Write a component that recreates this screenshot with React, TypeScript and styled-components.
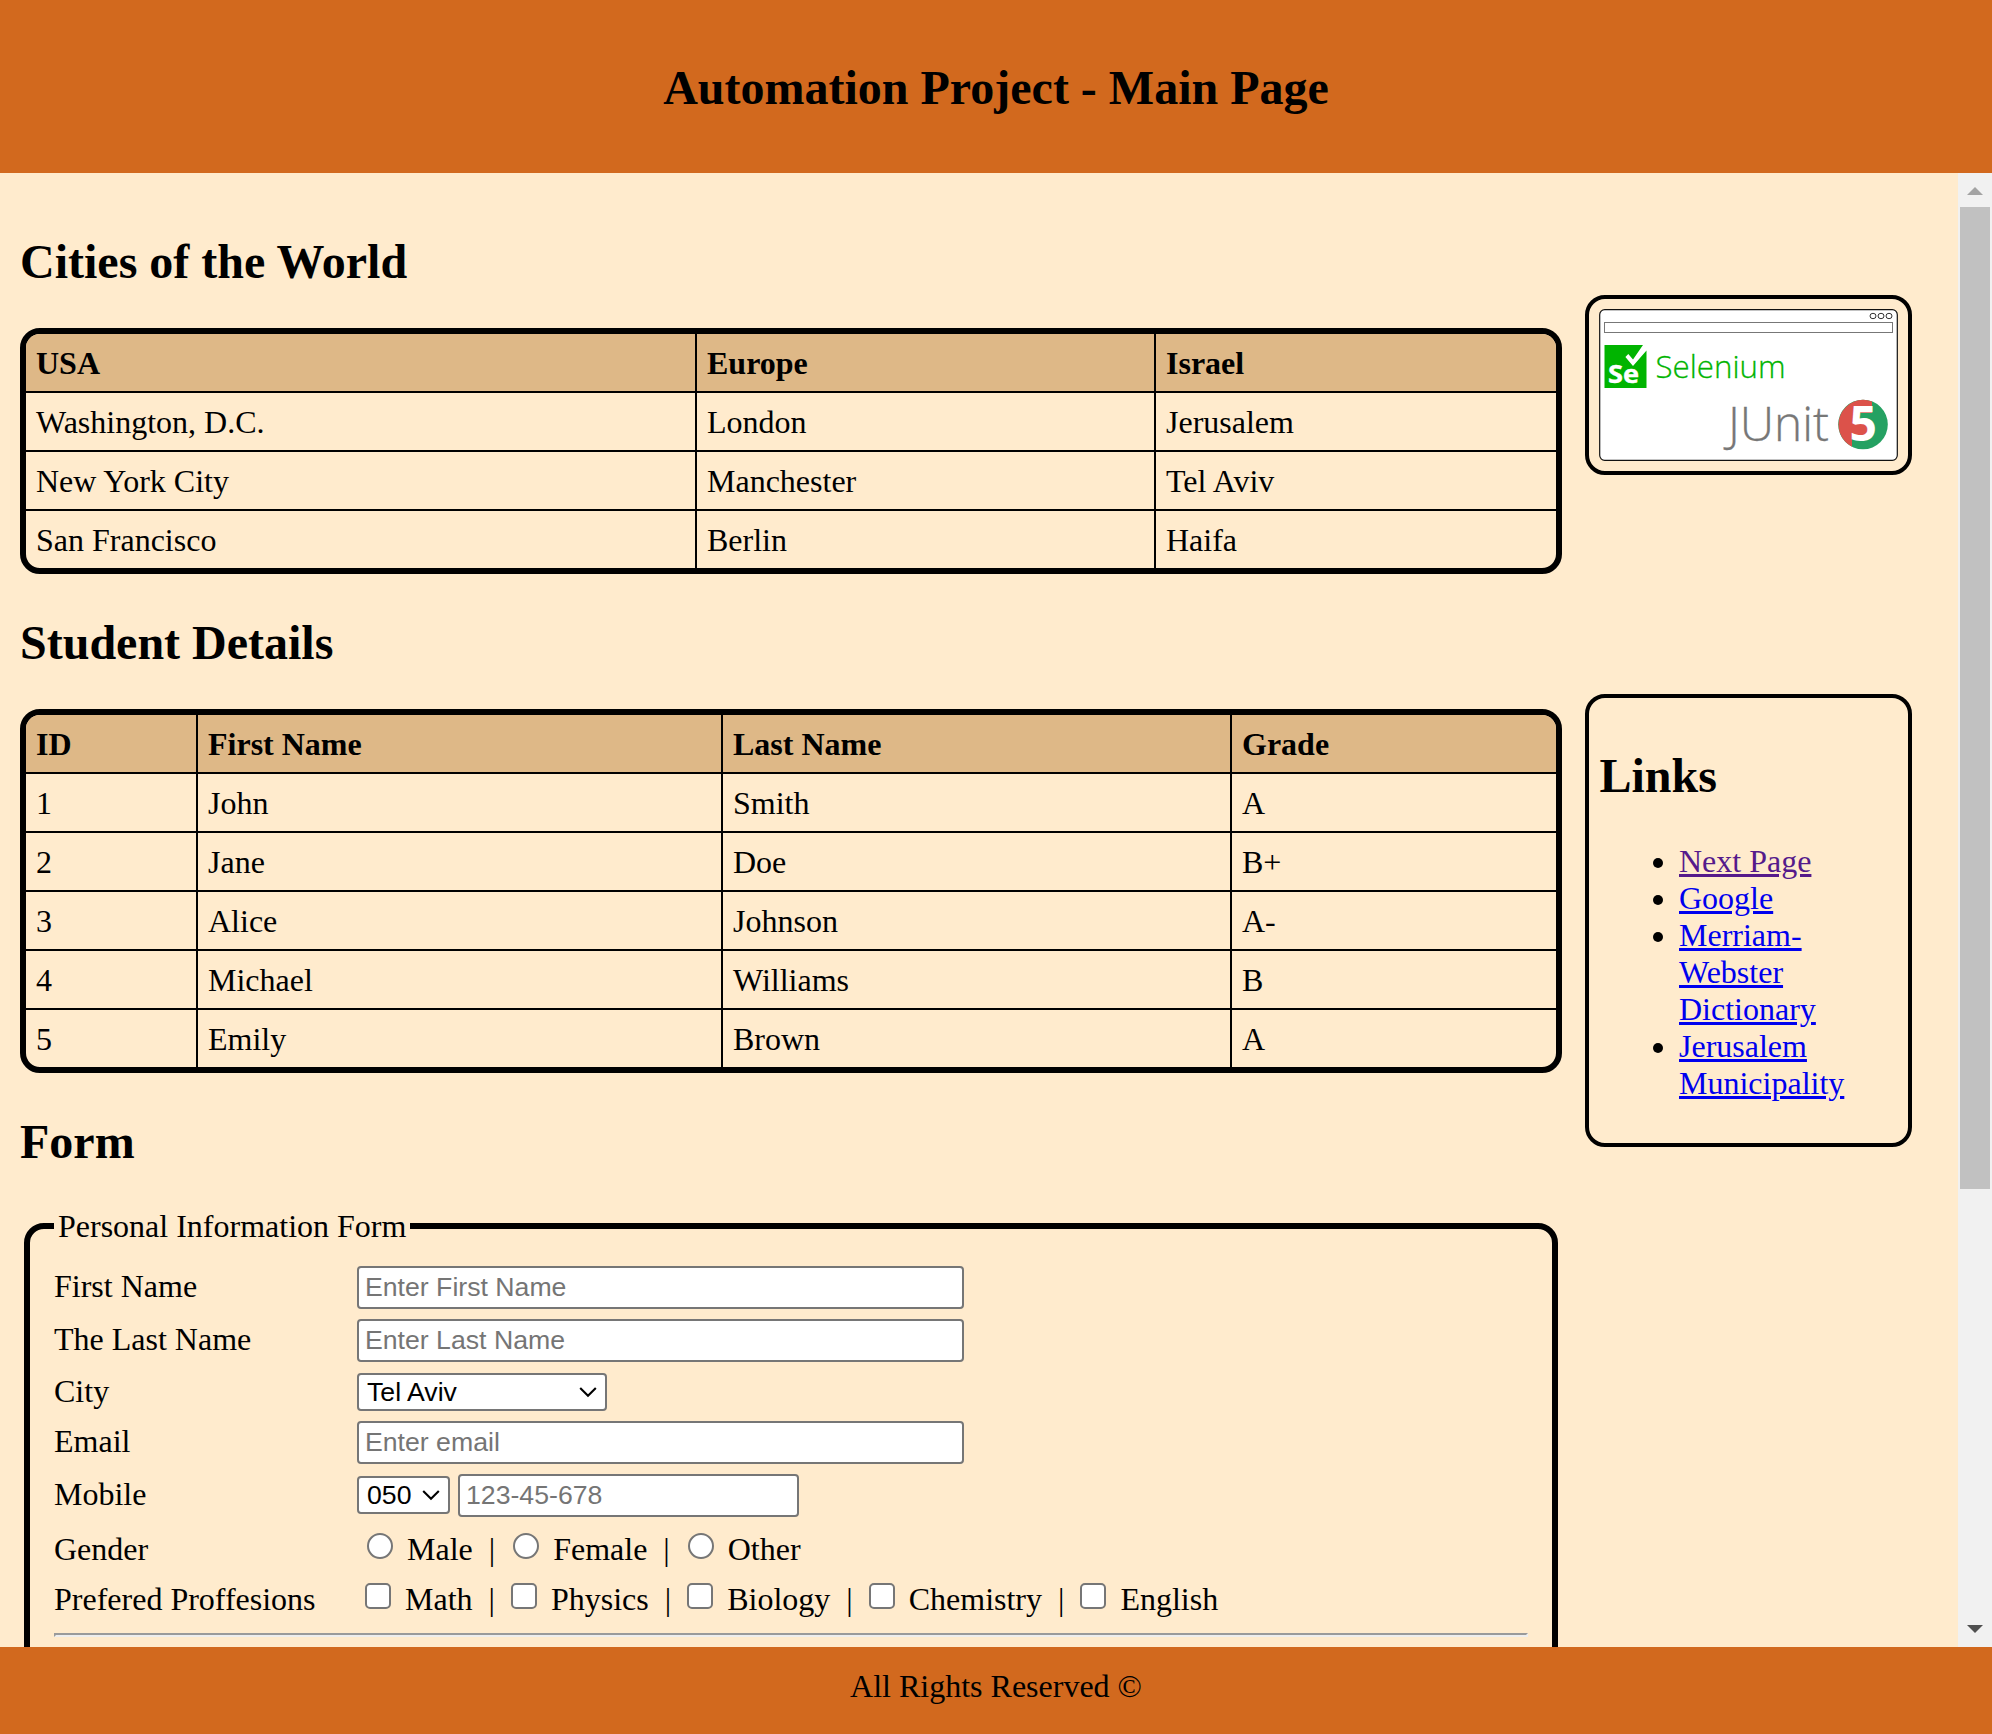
import React from "react";
import styled, { createGlobalStyle, css } from "styled-components";

const serif = `"Liberation Serif", "Times New Roman", serif`;
const sans = `"Liberation Sans", Arial, sans-serif`;

const GlobalStyle = createGlobalStyle`
  * { box-sizing: border-box; }
  html, body { margin: 0; padding: 0; overflow: hidden; }
  body {
    font-family: ${serif};
    font-size: 32px;
    line-height: 37px;
    color: #000;
    background: #ffebcd;
  }
`;

const Page = styled.div`
  display: flex;
  flex-direction: column;
  height: 1734px;
`;

const Header = styled.header`
  flex: none;
  display: flex;
  align-items: center;
  justify-content: center;
  height: 173px;
  padding-top: 1px;
  background: #d2691e;
`;

const Footer = styled.footer`
  flex: none;
  height: 87px;
  padding-top: 20.5px;
  text-align: center;
  background: #d2691e;
`;

const Title = styled.h1`
  margin: 0;
  font-size: 48px;
  line-height: 55px;
`;

const Heading = styled.h2`
  margin: 0;
  padding: 40.5px 0 39.5px;
  font-size: 48px;
  line-height: 55px;
`;

const Body = styled.div`
  flex: none;
  display: flex;
  height: 1474px;
  overflow: hidden;
`;

const Main = styled.main`
  flex: none;
  width: 1562px;
  padding: 20px 0 0 20px;
`;

const Aside = styled.aside`
  flex: none;
  display: flex;
  flex-direction: column;
  align-items: flex-start;
  gap: 219px;
  width: 396px;
  padding: 122px 0 0 23px;
`;

const TableFrame = styled.div`
  border: 6px solid #000;
  border-radius: 20px;
  overflow: hidden;
`;

const Table = styled.table`
  width: 100%;
  table-layout: fixed;
  border-collapse: separate;
  border-spacing: 0;
`;

const cell = css`
  height: 59px;
  padding: 10.5px 10px 9.5px;
  text-align: left;
  border-bottom: 2px solid #000;
  border-right: 2px solid #000;
  &:last-child { border-right: 0; }
`;

const Th = styled.th`
  ${cell}
  background: #deb887;
`;

const Td = styled.td`
  ${cell}
  tr:last-child > & { border-bottom: 0; height: 57px; }
`;

const Card = styled.section<{ $height: number }>`
  width: 327px;
  height: ${(p) => p.$height}px;
  padding: 10px;
  border: 4px solid #000;
  border-radius: 20px;

  ${Heading} { padding: 39.5px 0 40px 0.5px; }
`;

const Logo = styled.svg`
  display: block;
  width: 299px;
  height: 152px;
`;

const LinkList = styled.ul`
  margin: 0;
  padding: 0 0 0 80px;
`;

const Link = styled.a<{ $visited?: boolean }>`
  color: ${(p) => (p.$visited ? "#551a8b" : "#0000ee")};
  text-decoration: underline;
`;

const Fieldset = styled.fieldset`
  margin: 0 4px;
  height: 700px;
  padding: 22px 24px 0;
  border: 6px solid #000;
  border-radius: 20px;
`;

const Legend = styled.legend`
  padding: 0 4px;
  height: 36px;
`;

const Row = styled.div<{ $height: number }>`
  display: grid;
  grid-template-columns: 303px 1fr;
  height: ${(p) => p.$height}px;
`;

const RowLabel = styled.label<{ $top: number }>`
  padding-top: ${(p) => p.$top}px;
`;

const Controls = styled.div`
  display: flex;
  align-items: flex-start;
  gap: 8px;
`;

const TextInput = styled.input<{ $width: number }>`
  width: ${(p) => p.$width}px;
  height: 43px;
  padding: 0 6px;
  border: 2px solid #767676;
  border-radius: 4px;
  background: #fff;
  font: 26.667px ${sans};
  &::placeholder { color: #757575; opacity: 1; }
`;

const SelectWrap = styled.span<{ $width: number; $top?: number }>`
  position: relative;
  width: ${(p) => p.$width}px;
  height: 38px;
  margin-top: ${(p) => p.$top ?? 0}px;
`;

const NativeSelect = styled.select`
  appearance: none;
  display: block;
  width: 100%;
  height: 100%;
  padding: 0 8px;
  border: 2px solid #767676;
  border-radius: 4px;
  background: #fff;
  color: #000;
  font: 26.667px ${sans};
`;

const Chevron = styled.svg`
  position: absolute;
  right: 10px;
  top: 13px;
  width: 18px;
  height: 12px;
`;

const Choices = styled.div<{ $top: number }>`
  padding-top: ${(p) => p.$top}px;
  white-space: pre;
`;

const Choice = styled.input<{ $left: number }>`
  appearance: none;
  width: 26px;
  height: 26px;
  margin: 0 6px 0 ${(p) => p.$left}px;
  vertical-align: 1px;
  border: 2px solid #767676;
  border-radius: ${(p) => (p.type === "radio" ? "50%" : "5px")};
  background: #fff;
`;

const Rule = styled.hr`
  height: 4px;
  margin: 0;
  border: 2px solid;
  border-color: #9a9a9a #eee #eee #9a9a9a;
`;

const ScrollTrack = styled.div`
  flex: none;
  display: flex;
  flex-direction: column;
  align-items: center;
  width: 34px;
  background: #f1f1f1;
`;

const ScrollButton = styled.svg`
  flex: none;
  width: 34px;
  height: 34px;
`;

const ScrollSpace = styled.div`
  flex: 1;
`;

const ScrollThumb = styled.div`
  width: 30px;
  height: 982px;
  background: #c1c1c1;
`;

type DataTableProps = { head: string[]; rows: string[][]; widths: number[] };

function DataTable({ head, rows, widths }: DataTableProps) {
  return (
    <TableFrame>
      <Table>
        <colgroup>
          {widths.map((w, i) => (
            <col key={i} width={w} />
          ))}
        </colgroup>
        <thead>
          <tr>{head.map((h) => <Th key={h}>{h}</Th>)}</tr>
        </thead>
        <tbody>
          {rows.map((r) => (
            <tr key={r[0]}>{r.map((c, i) => <Td key={i}>{c}</Td>)}</tr>
          ))}
        </tbody>
      </Table>
    </TableFrame>
  );
}

function Select({ value, width, top }: { value: string; width: number; top?: number }) {
  return (
    <SelectWrap $width={width} $top={top}>
      <NativeSelect defaultValue={value}>
        <option>{value}</option>
      </NativeSelect>
      <Chevron viewBox="0 0 18 12">
        <path d="M1.2 2 L9 9.8 L16.8 2" fill="none" stroke="#000" strokeWidth="2.1" />
      </Chevron>
    </SelectWrap>
  );
}

function ChoiceGroup({ kind, name, options, left, top }: {
  kind: "radio" | "checkbox"; name: string; options: string[]; left: number; top: number;
}) {
  return (
    <Choices $top={top}>
      {options.map((o, i) => (
        <React.Fragment key={o}>
          {i > 0 && "\u00a0 | "}
          <Choice type={kind} name={name} $left={left} />
          {" " + o}
        </React.Fragment>
      ))}
    </Choices>
  );
}

function ToolsLogo() {
  return (
    <Logo viewBox="0 0 299 152">
      <rect x="0.7" y="0.7" width="297.6" height="150.6" rx="5" fill="#fff" stroke="#111" strokeWidth="1.2" />
      <g fill="none" stroke="#333" strokeWidth="1">
        <ellipse cx="274" cy="7" rx="3" ry="2.7" />
        <ellipse cx="282" cy="7" rx="3" ry="2.7" />
        <ellipse cx="290" cy="7" rx="3" ry="2.7" />
      </g>
      <rect x="5.5" y="13.5" width="288" height="10" fill="#fff" stroke="#777" strokeWidth="1" />
      <path d="M5.5 36 H44 L34 50.5 L29.3 45 L26.4 48 L34 57 L47.5 41.5 V79 H5.5 Z" fill="#00b400" />
      <text x="9" y="74" fontFamily="Open Sans" fontWeight="700" fontSize="24.5" fill="#fff" stroke="#fff" strokeWidth="0.4" textLength="31" lengthAdjust="spacingAndGlyphs">Se</text>
      <text x="56.5" y="69.3" fontFamily="Open Sans" fontWeight="300" fontSize="31.5" fill="#00b400" stroke="#00b400" strokeWidth="0.3" textLength="130" lengthAdjust="spacingAndGlyphs">Selenium</text>
      <text x="129" y="131.8" fontFamily="Open Sans" fontWeight="300" fontSize="47.5" fill="#777" stroke="#777" strokeWidth="0.3" textLength="101" lengthAdjust="spacingAndGlyphs">JUnit</text>
      <circle cx="264" cy="115.5" r="24.8" fill="#25a162" />
      <path d="M273 92.4 A24.8 24.8 0 0 0 253 137.7 V128 H258 V104 H273 Z" fill="#dc524a" />
      <ellipse cx="261" cy="121.5" rx="8.5" ry="8" fill="#dc524a" />
      <text x="250.4" y="132.2" fontFamily="Open Sans" fontWeight="700" fontSize="48" fill="#fff">5</text>
    </Logo>
  );
}

export default function App() {
  return (
    <Page>
      <GlobalStyle />
      <Header>
        <Title>Automation Project - Main Page</Title>
      </Header>
      <Body>
        <Main>
          <Heading>Cities of the World</Heading>
          <DataTable
            widths={[671, 459, 400]}
            head={["USA", "Europe", "Israel"]}
            rows={[
              ["Washington, D.C.", "London", "Jerusalem"],
              ["New York City", "Manchester", "Tel Aviv"],
              ["San Francisco", "Berlin", "Haifa"],
            ]}
          />
          <Heading>Student Details</Heading>
          <DataTable
            widths={[172, 525, 509, 324]}
            head={["ID", "First Name", "Last Name", "Grade"]}
            rows={[
              ["1", "John", "Smith", "A"],
              ["2", "Jane", "Doe", "B+"],
              ["3", "Alice", "Johnson", "A-"],
              ["4", "Michael", "Williams", "B"],
              ["5", "Emily", "Brown", "A"],
            ]}
          />
          <Heading>Form</Heading>
          <Fieldset>
            <Legend>Personal Information Form</Legend>
            <Row $height={53}>
              <RowLabel $top={1.5}>First Name</RowLabel>
              <Controls><TextInput $width={607} placeholder="Enter First Name" /></Controls>
            </Row>
            <Row $height={54}>
              <RowLabel $top={1.5}>The Last Name</RowLabel>
              <Controls><TextInput $width={607} placeholder="Enter Last Name" /></Controls>
            </Row>
            <Row $height={48}>
              <RowLabel $top={0}>City</RowLabel>
              <Controls><Select value="Tel Aviv" width={250} /></Controls>
            </Row>
            <Row $height={53}>
              <RowLabel $top={1.5}>Email</RowLabel>
              <Controls><TextInput $width={607} placeholder="Enter email" /></Controls>
            </Row>
            <Row $height={53}>
              <RowLabel $top={1.5}>Mobile</RowLabel>
              <Controls>
                <Select value="050" width={93} top={2} />
                <TextInput $width={341} placeholder="123-45-678" />
              </Controls>
            </Row>
            <Row $height={53}>
              <RowLabel $top={3.5}>Gender</RowLabel>
              <ChoiceGroup kind="radio" name="gender" options={["Male", "Female", "Other"]} left={10} top={3.5} />
            </Row>
            <Row $height={53}>
              <RowLabel $top={0.5}>Prefered Proffesions</RowLabel>
              <ChoiceGroup kind="checkbox" name="professions" options={["Math", "Physics", "Biology", "Chemistry", "English"]} left={8} top={0.5} />
            </Row>
            <Rule />
          </Fieldset>
        </Main>
        <Aside>
          <Card $height={180}>
            <ToolsLogo />
          </Card>
          <Card $height={453}>
            <Heading>Links</Heading>
            <LinkList>
              <li><Link $visited>Next Page</Link></li>
              <li><Link>Google</Link></li>
              <li><Link>Merriam-Webster Dictionary</Link></li>
              <li><Link>Jerusalem Municipality</Link></li>
            </LinkList>
          </Card>
        </Aside>
        <ScrollTrack>
          <ScrollButton viewBox="0 0 34 34"><path d="M9 22 L17 14 L25 22 Z" fill="#a3a3a3" /></ScrollButton>
          <ScrollThumb />
          <ScrollSpace />
          <ScrollButton viewBox="0 0 34 34"><path d="M9 12 H25 L17 20 Z" fill="#505050" /></ScrollButton>
        </ScrollTrack>
      </Body>
      <Footer>All Rights Reserved ©</Footer>
    </Page>
  );
}
